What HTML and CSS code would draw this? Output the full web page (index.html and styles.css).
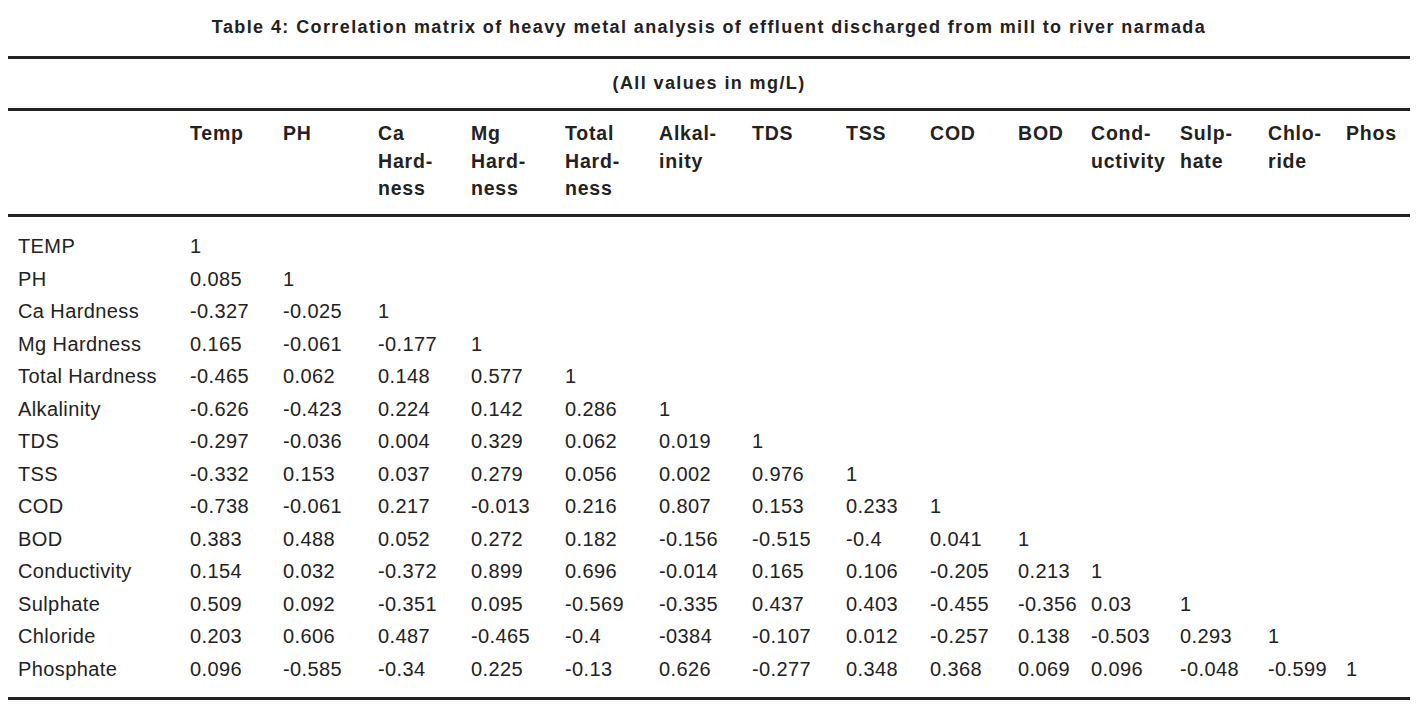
FILE: index.html
```html
<!DOCTYPE html>
<html lang="en">
<head>
<meta charset="utf-8">
<title>Table 4: Correlation matrix</title>
<link rel="stylesheet" href="styles.css">
</head>
<body>
<div class="page">
  <h1 class="caption">Table 4: Correlation matrix of heavy metal analysis of effluent discharged from mill to river narmada</h1>
  <table class="matrix">
    <colgroup>
      <col class="c-label">
      <col class="c93"><col class="c95"><col class="c93"><col class="c94"><col class="c94"><col class="c93"><col class="c94">
      <col class="c84"><col class="c88"><col class="c73"><col class="c89"><col class="c88"><col class="c78"><col class="c64">
    </colgroup>
    <thead>
      <tr class="units-row"><th colspan="15" class="units">(All values in mg/L)</th></tr>
      <tr class="head-row">
        <th class="label"></th>
        <th>Temp</th>
        <th>PH</th>
        <th>Ca<br>Hard-<br>ness</th>
        <th>Mg<br>Hard-<br>ness</th>
        <th>Total<br>Hard-<br>ness</th>
        <th>Alkal-<br>inity</th>
        <th>TDS</th>
        <th>TSS</th>
        <th>COD</th>
        <th>BOD</th>
        <th>Cond-<br>uctivity</th>
        <th>Sulp-<br>hate</th>
        <th>Chlo-<br>ride</th>
        <th>Phos</th>
      </tr>
    </thead>
    <tbody>
      <tr class="first"><td class="label">TEMP</td><td>1</td><td></td><td></td><td></td><td></td><td></td><td></td><td></td><td></td><td></td><td></td><td></td><td></td><td></td></tr>
      <tr><td class="label">PH</td><td>0.085</td><td>1</td><td></td><td></td><td></td><td></td><td></td><td></td><td></td><td></td><td></td><td></td><td></td><td></td></tr>
      <tr><td class="label">Ca Hardness</td><td>-0.327</td><td>-0.025</td><td>1</td><td></td><td></td><td></td><td></td><td></td><td></td><td></td><td></td><td></td><td></td><td></td></tr>
      <tr><td class="label">Mg Hardness</td><td>0.165</td><td>-0.061</td><td>-0.177</td><td>1</td><td></td><td></td><td></td><td></td><td></td><td></td><td></td><td></td><td></td><td></td></tr>
      <tr><td class="label">Total Hardness</td><td>-0.465</td><td>0.062</td><td>0.148</td><td>0.577</td><td>1</td><td></td><td></td><td></td><td></td><td></td><td></td><td></td><td></td><td></td></tr>
      <tr><td class="label">Alkalinity</td><td>-0.626</td><td>-0.423</td><td>0.224</td><td>0.142</td><td>0.286</td><td>1</td><td></td><td></td><td></td><td></td><td></td><td></td><td></td><td></td></tr>
      <tr><td class="label">TDS</td><td>-0.297</td><td>-0.036</td><td>0.004</td><td>0.329</td><td>0.062</td><td>0.019</td><td>1</td><td></td><td></td><td></td><td></td><td></td><td></td><td></td></tr>
      <tr><td class="label">TSS</td><td>-0.332</td><td>0.153</td><td>0.037</td><td>0.279</td><td>0.056</td><td>0.002</td><td>0.976</td><td>1</td><td></td><td></td><td></td><td></td><td></td><td></td></tr>
      <tr><td class="label">COD</td><td>-0.738</td><td>-0.061</td><td>0.217</td><td>-0.013</td><td>0.216</td><td>0.807</td><td>0.153</td><td>0.233</td><td>1</td><td></td><td></td><td></td><td></td><td></td></tr>
      <tr><td class="label">BOD</td><td>0.383</td><td>0.488</td><td>0.052</td><td>0.272</td><td>0.182</td><td>-0.156</td><td>-0.515</td><td>-0.4</td><td>0.041</td><td>1</td><td></td><td></td><td></td><td></td></tr>
      <tr><td class="label">Conductivity</td><td>0.154</td><td>0.032</td><td>-0.372</td><td>0.899</td><td>0.696</td><td>-0.014</td><td>0.165</td><td>0.106</td><td>-0.205</td><td>0.213</td><td>1</td><td></td><td></td><td></td></tr>
      <tr><td class="label">Sulphate</td><td>0.509</td><td>0.092</td><td>-0.351</td><td>0.095</td><td>-0.569</td><td>-0.335</td><td>0.437</td><td>0.403</td><td>-0.455</td><td>-0.356</td><td>0.03</td><td>1</td><td></td><td></td></tr>
      <tr><td class="label">Chloride</td><td>0.203</td><td>0.606</td><td>0.487</td><td>-0.465</td><td>-0.4</td><td>-0384</td><td>-0.107</td><td>0.012</td><td>-0.257</td><td>0.138</td><td>-0.503</td><td>0.293</td><td>1</td><td></td></tr>
      <tr class="last"><td class="label">Phosphate</td><td>0.096</td><td>-0.585</td><td>-0.34</td><td>0.225</td><td>-0.13</td><td>0.626</td><td>-0.277</td><td>0.348</td><td>0.368</td><td>0.069</td><td>0.096</td><td>-0.048</td><td>-0.599</td><td>1</td></tr>
    </tbody>
  </table>
</div>
</body>
</html>
```

FILE: styles.css
```css
html, body {
  margin: 0;
  padding: 0;
  background: #ffffff;
}

body {
  font-family: "Liberation Sans", Arial, Helvetica, sans-serif;
  color: #222222;
}

.page {
  width: 1402px;
  margin-left: 8px;
}

.caption {
  margin: 0;
  padding-top: 16px;
  height: 56px;
  box-sizing: border-box;
  font-size: 18px;
  line-height: 22px;
  font-weight: bold;
  text-align: center;
  letter-spacing: 1.4px;
  color: #222222;
}

.matrix {
  width: 1402px;
  border-collapse: collapse;
  table-layout: fixed;
  font-size: 20px;
  letter-spacing: 0.4px;
}

.c-label { width: 182px; }
.c93 { width: 93px; }
.c95 { width: 95px; }
.c94 { width: 94px; }
.c84 { width: 84px; }
.c88 { width: 88px; }
.c73 { width: 73px; }
.c89 { width: 89px; }
.c78 { width: 78px; }
.c64 { width: 64px; }

.matrix th,
.matrix td {
  padding: 0;
  text-align: left;
  vertical-align: top;
  white-space: nowrap;
}

.units-row {
  border-top: 3px solid #222222;
  border-bottom: 3px solid #222222;
}

.units {
  height: 49px;
  vertical-align: middle !important;
  text-align: center !important;
  font-size: 18px;
  font-weight: bold;
  letter-spacing: 1.4px;
}

.head-row {
  border-bottom: 3px solid #222222;
}

.head-row th {
  font-weight: bold;
  font-size: 19.5px;
  line-height: 27.5px;
  letter-spacing: 0.8px;
  padding-top: 9px;
  padding-bottom: 11px;
  height: 83px;
}

.matrix tbody td {
  height: 32.5px;
  line-height: 32.5px;
}

.matrix .label {
  padding-left: 10px;
}

.matrix tbody tr.first td {
  padding-top: 13px;
}

.matrix tbody tr.last td {
  padding-bottom: 12px;
}

.matrix tbody tr.last {
  border-bottom: 3px solid #222222;
}
```
